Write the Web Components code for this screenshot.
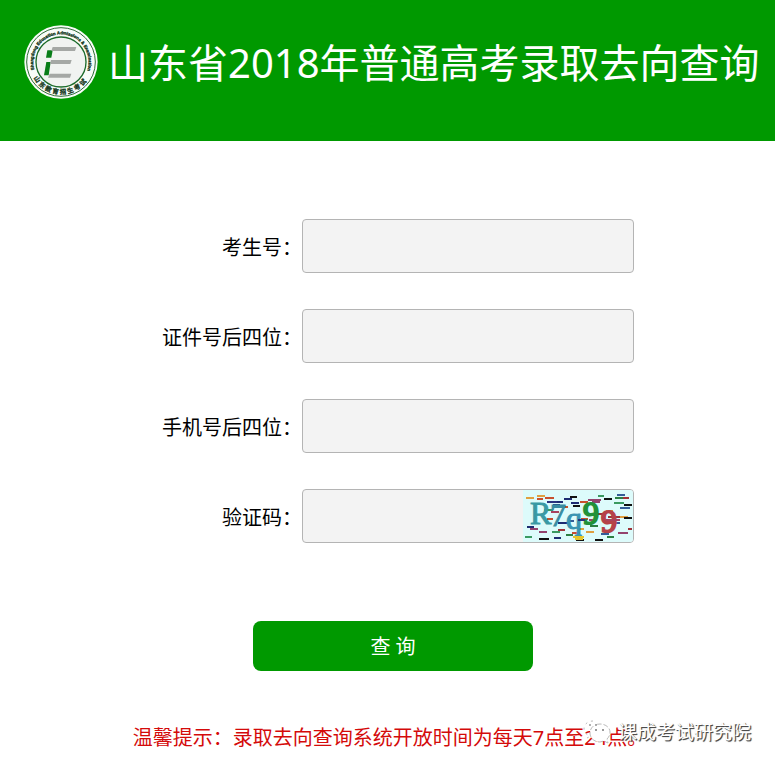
<!DOCTYPE html>
<html lang="zh-CN">
<head>
<meta charset="utf-8">
<meta name="viewport" content="width=device-width, initial-scale=1">
<title>山东省2018年普通高考录取去向查询</title>
<style>
  body { margin: 0; background: #fff; color: #000; font: 20px/28px "Noto Sans", "Noto Sans CJK SC", sans-serif; }
</style>
</head>
<body>
<query-page></query-page>

<template id="t-page">
  <style>
    :host { display: block; position: relative; }
    form { display: flex; flex-direction: column; gap: 36px; padding-top: 78px; }
    .actions { display: flex; justify-content: center; padding: 42px 0 0 11px; }
    button { width: 280px; height: 50px; border: 0; border-radius: 8px; padding: 2px 0 0; background: #090; color: #fff; font: inherit; cursor: pointer; }
    .tip { margin: 0; padding: 53px 0 12px 5px; text-align: center; color: #d40a0a; }
    chat-watermark { position: absolute; right: 24px; bottom: 18px; }
  </style>
  <page-header>山东省2018年普通高考录取去向查询</page-header>
  <form>
    <form-row label="考生号："></form-row>
    <form-row label="证件号后四位："></form-row>
    <form-row label="手机号后四位："></form-row>
    <form-row label="验证码："><captcha-image></captcha-image></form-row>
    <div class="actions"><button type="button">查 询</button></div>
  </form>
  <p class="tip">温馨提示：录取去向查询系统开放时间为每天7点至24点。</p>
  <chat-watermark>课成考试研究院</chat-watermark>
</template>

<template id="t-header">
  <style>
    :host { display: flex; align-items: flex-start; gap: 10px; padding: 25px 12px 40px 24px; background: #090; color: #fff; }
    h1 { margin: 0; font-size: 40px; line-height: 76px; font-weight: 400; }
    school-logo { flex: none; }
  </style>
  <school-logo></school-logo>
  <h1><slot></slot></h1>
</template>

<template id="t-logo">
  <style>
    :host { display: block; width: 74px; height: 74px; }
    svg { display: block; width: 100%; height: 100%; }
    text { font-family: "Liberation Sans", "Noto Sans CJK SC", sans-serif; font-weight: 700; fill: #14381c; }
  </style>
  <svg viewBox="0 0 222 222" role="img" aria-label="山东教育招生考试">
    <defs>
      <path id="upper" d="M31 134A83 83 0 1 1 187 144"/>
      <path id="lower" d="M25 152A95 95 0 0 0 198 152"/>
    </defs>
    <circle cx="111" cy="111" r="110" fill="#f8fcf8"/>
    <circle cx="111" cy="111" r="103" fill="none" stroke="#306b38" stroke-width="3"/>
    <circle cx="111" cy="111" r="75" fill="#f1f3f1" stroke="#1c6b2a" stroke-width="4"/>
    <text font-size="13" stroke="#14381c" stroke-width="1"><textPath href="#upper">Shangdong Education Admissions &amp; Examination</textPath></text>
    <text font-size="19" stroke="#14381c" stroke-width="1"><textPath href="#lower" startOffset="8">山 东 教 育 招 生 考 试</textPath></text>
    <g fill="#087d18">
      <path d="M70 76H86L82 98H66Z"/>
      <path d="M67 111H80L74 151H60Z"/>
    </g>
    <g fill="#a5a8a5">
      <path d="M86 66H157L153 78H82Z"/>
      <path d="M81 105H143L139 117H78Z"/>
      <path d="M77 146H142L138 158H72Z"/>
    </g>
  </svg>
</template>

<template id="t-row">
  <style>
    :host { display: grid; grid-template-columns: 302fr 332px 141fr; align-items: center; }
    label { padding-top: 4px; text-align: right; }
    .field { display: flex; box-sizing: border-box; height: 54px; border: 1px solid #b4b4b4; border-radius: 4px; background: #f3f3f3; overflow: hidden; }
    input { flex: 1; min-width: 0; border: 0; padding: 0 10px; background: transparent; font: inherit; outline: none; }
  </style>
  <label for="value"></label>
  <div class="field"><input id="value" type="text" autocomplete="off"><slot></slot></div>
</template>

<template id="t-captcha">
  <style>
    :host { display: block; flex: none; width: 110px; height: 52px; }
    svg { display: block; }
    text { font-family: "Liberation Serif", serif; font-size: 32px; }
  </style>
  <svg width="110" height="52" viewBox="0 0 110 52" role="img" aria-label="验证码图片">
    <rect width="110" height="52" fill="#ddfbfb"/>
    <g fill="none" stroke-width="2">
      <path stroke="#e0a040" d="M3 8h8M14 6h8M83 21h7M95 27h10M63 42h8M54 39h7"/>
      <path stroke="#c8502e" d="M14 9h6M22 8h9M40 17h5M57 12h8M24 29h6M58 29h7M49 43h8"/>
      <path stroke="#1d2c72" d="M31 12h9M41 9h8M48 13h8M30 15h7M4 37h7M35 33h10M31 48h7"/>
      <path stroke="#111" d="M47 7h7M50 16h7M16 49h10M72 50h8M81 9h8M101 15h8M101 28h8M53 50h8"/>
      <path stroke="#3a9a61" d="M75 6h6M91 13h10M21 20h9M2 47h7M29 42h8"/>
      <path stroke="#93436e" d="M7 39h8M69 12h8M65 10h13M95 43h10M16 42h8M66 30h8"/>
      <path stroke="#a03238" d="M100 8h6M75 24h8M85 27h12M105 39h4M35 40h7"/>
      <path stroke="#345c98" d="M94 5h8M97 18h10M89 33h8M45 31h6M78 44h8"/>
      <path stroke="#2b7e42" d="M92 8h8M67 36h8M84 47h7M43 45h7"/>
    </g>
    <g stroke-width="1">
      <text x="7" y="34" fill="#3999a4" stroke="#3999a4">R</text>
      <text x="27" y="36" fill="#398ca1" stroke="#398ca1">7</text>
      <text x="43" y="39" fill="#3994b2" stroke="#3994b2">q</text>
      <text x="60" y="34" fill="#219139" stroke="#219139" stroke-width="2">9</text>
      <text x="78" y="42" fill="#b54249" stroke="#b54249" stroke-width="2">9</text>
    </g>
    <g fill="none" stroke-width="2">
      <path stroke="#e5c629" d="M50 47h11M52 49h8"/>
      <path stroke="#2b327e" d="M24 12h10M55 30h7"/>
      <path stroke="#a9435c" d="M28 22h8M83 30h14"/>
    </g>
  </svg>
</template>

<template id="t-watermark">
  <style>
    :host { display: flex; align-items: center; gap: 7px; color: #fff; font-size: 19px; line-height: 28px; text-shadow: 1px 1px 1px #444, 1px 1px 0 #777; pointer-events: none; }
    svg { flex: none; }
  </style>
  <svg width="28" height="26" viewBox="0 0 28 26" aria-hidden="true">
    <path d="M10 2C4 2 1 6 1 10c0 3 2 5 4 6l-1 3 4-2h4" fill="none" stroke="#bbb" stroke-width="1" stroke-dasharray="2 4"/>
    <path d="M17 5c-6 0-10 4-10 9s4 9 10 9l4-1 4 2-1-4c2-2 3-4 3-7 0-4-4-8-10-8Z" fill="#fff" stroke="#bbb" stroke-width="1" stroke-dasharray="5 2"/>
    <circle cx="13" cy="11" r="1" fill="#777"/><circle cx="20" cy="11" r="1" fill="#777"/>
    <circle cx="7" cy="6" r="1" fill="#999"/><circle cx="13" cy="6" r="1" fill="#999"/>
  </svg>
  <span><slot></slot></span>
</template>

<script>
  class TemplateElement extends HTMLElement {
    constructor() {
      super();
      const template = document.getElementById(this.constructor.template);
      this.attachShadow({ mode: "open" }).append(template.content.cloneNode(true));
    }
  }
  customElements.define("school-logo", class extends TemplateElement { static template = "t-logo"; });
  customElements.define("page-header", class extends TemplateElement { static template = "t-header"; });
  customElements.define("captcha-image", class extends TemplateElement { static template = "t-captcha"; });
  customElements.define("form-row", class extends TemplateElement {
    static template = "t-row";
    connectedCallback() {
      this.shadowRoot.querySelector("label").textContent = this.getAttribute("label");
    }
  });
  customElements.define("chat-watermark", class extends TemplateElement { static template = "t-watermark"; });
  customElements.define("query-page", class extends TemplateElement { static template = "t-page"; });
</script>
</body>
</html>
